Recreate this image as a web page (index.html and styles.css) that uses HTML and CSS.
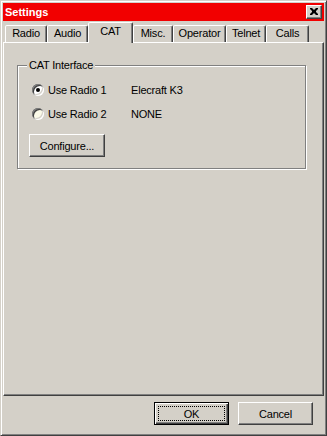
FILE: index.html
```html
<!DOCTYPE html>
<html>
<head>
<meta charset="utf-8">
<link rel="stylesheet" href="styles.css">
</head>
<body>
<div class="window">
  <div class="titlebar">
    <span class="title">Settings</span>
    <div class="close">
      <svg width="8" height="7" viewBox="0 0 8 7"><path d="M0 0h2l2 2 2-2h2v1l-2 2v1l2 2v1h-2l-2-2-2 2h-2v-1l2-2v-1l-2-2z" fill="#000"/></svg>
    </div>
  </div>
  <div class="tabs">
    <div class="tab t1">Radio</div>
    <div class="tab t2">Audio</div>
    <div class="tab t3 selected">CAT</div>
    <div class="tab t4">Misc.</div>
    <div class="tab t5">Operator</div>
    <div class="tab t6">Telnet</div>
    <div class="tab t7">Calls</div>
  </div>
  <div class="panel">
    <div class="group">
      <div class="group-label">CAT Interface</div>
      <div class="row">
        <span class="radio checked"></span>
        <span class="opt">Use Radio 1</span>
        <span class="val">Elecraft K3</span>
      </div>
      <div class="row">
        <span class="radio hot"></span>
        <span class="opt">Use Radio 2</span>
        <span class="val">NONE</span>
      </div>
      <div class="btn configure">Configure...</div>
    </div>
  </div>
  <div class="footer">
    <div class="btn default"><span class="focus">OK</span></div>
    <div class="btn">Cancel</div>
  </div>
</div>
</body>
</html>
```

FILE: styles.css
```css
* { box-sizing: border-box; }
html, body {
  margin: 0;
  padding: 0;
  background: #d4d0c8;
}
body {
  font-family: "Liberation Sans", Arial, sans-serif;
  font-size: 11px;
  letter-spacing: -0.2px;
  color: #000;
}
.window {
  width: 327px;
  height: 436px;
  border: 1px solid;
  border-color: #d4d0c8 #404040 #404040 #d4d0c8;
  box-shadow: inset 1px 1px 0 #fff, inset -1px -1px 0 #808080;
  padding: 2px;
  display: flex;
  flex-direction: column;
  background: #d4d0c8;
}
.titlebar {
  height: 18px;
  background: #f20000;
  display: flex;
  align-items: center;
  justify-content: space-between;
  padding: 0 2px 0 2px;
}
.title {
  color: #fff;
  font-weight: bold;
  font-size: 11px;
  letter-spacing: 0;
  line-height: 18px;
}
.close {
  width: 16px;
  height: 14px;
  background: #d4d0c8;
  border: 1px solid;
  border-color: #fff #404040 #404040 #fff;
  box-shadow: inset -1px -1px 0 #808080;
  display: flex;
  align-items: center;
  justify-content: center;
  padding: 0 1px 1px 0;
}
.close svg { display: block; }
.tabs {
  margin-top: 1px;
  height: 20px;
  display: flex;
  align-items: flex-end;
  padding-left: 2px;
  position: relative;
  z-index: 2;
}
.tab {
  height: 17px;
  border: 1px solid;
  border-bottom: none;
  border-color: #fff #404040 transparent #fff;
  border-radius: 2px 2px 0 0;
  box-shadow: inset -1px 0 0 #808080;
  text-align: center;
  line-height: 15px;
  white-space: nowrap;
  background: #d4d0c8;
}
.tab.selected {
  height: 21px;
  margin-bottom: -1px;
  line-height: 17px;
}
.t1 { width: 42px; }
.t2 { width: 41px; }
.t3 { width: 45px; }
.t4 { width: 40px; }
.t5 { width: 53px; }
.t6 { width: 40px; }
.t7 { width: 43px; }
.panel {
  height: 354px;
  border: 1px solid;
  border-color: #fff #404040 #404040 #fff;
  box-shadow: inset -1px -1px 0 #808080;
  padding: 22px 0 0 13px;
}
.group {
  position: relative;
  width: 289px;
  height: 104px;
  border: 1px solid #808080;
  box-shadow: 1px 1px 0 #fff, inset 1px 1px 0 #fff;
  padding: 12px 0 0 11px;
}
.group-label {
  position: absolute;
  top: -8px;
  left: 9px;
  padding: 0 2px;
  background: #d4d0c8;
  line-height: 14px;
}
.row {
  height: 24px;
  display: flex;
  align-items: center;
  padding-left: 3px;
}
.radio {
  width: 12px;
  height: 12px;
  border-radius: 50%;
  background: #fff;
  box-shadow: inset 1px 1px 0 #808080, inset -1px -1px 0 #fff, inset 2px 2px 0 #404040, inset -2px -2px 0 #d4d0c8;
  display: flex;
  align-items: center;
  justify-content: center;
}
.radio.hot { background: #fbfae8; }
.radio.checked::after {
  content: "";
  width: 4px;
  height: 4px;
  border-radius: 50%;
  background: #000;
}
.opt {
  margin-left: 4px;
  width: 83px;
}
.btn {
  width: 75px;
  height: 23px;
  border: 1px solid;
  border-color: #fff #404040 #404040 #fff;
  box-shadow: inset -1px -1px 0 #808080;
  display: flex;
  align-items: center;
  justify-content: center;
  background: #d4d0c8;
}
.configure {
  margin-top: 8px;
  width: 76px;
}
.footer {
  flex: 1;
  display: flex;
  justify-content: flex-end;
  align-items: flex-start;
  gap: 9px;
  padding: 6px 11px 0 0;
}
.btn.default {
  border: 1px solid #000;
  box-shadow: inset 1px 1px 0 #fff, inset -1px -1px 0 #404040, inset -2px -2px 0 #808080;
  padding: 3px;
}
.focus {
  width: 100%;
  height: 100%;
  border: 1px dotted #000;
  display: flex;
  align-items: center;
  justify-content: center;
}
```
